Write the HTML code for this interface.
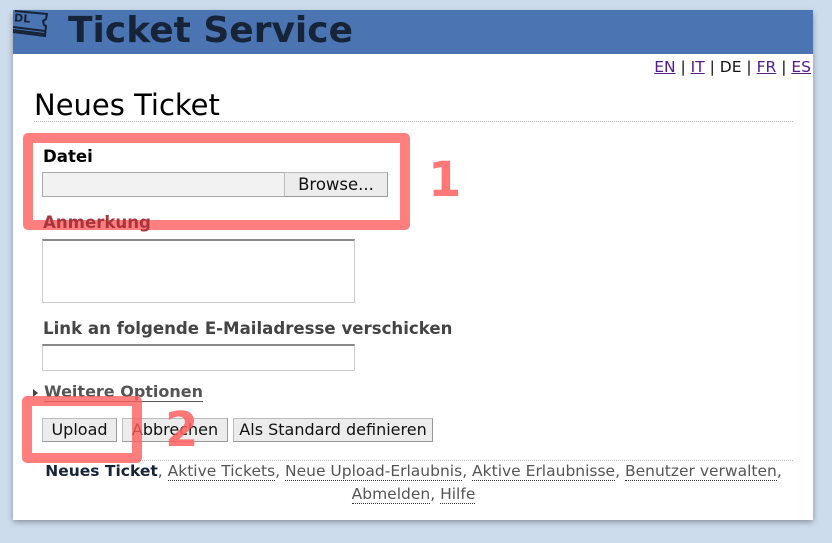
<!DOCTYPE html>
<html><head><meta charset="utf-8">
<style>
body{margin:0;width:832px;height:543px;background:#cddcec;position:relative;overflow:hidden;font-family:"DejaVu Sans","Liberation Sans",sans-serif;}
.a{position:absolute;}
#panel{left:13px;top:11px;width:800px;height:509px;background:#fff;box-shadow:0 2px 6px rgba(0,0,0,.35);}
#hdr{left:13px;top:10px;width:800px;height:44px;background:#4a74b2;}
#title{left:68px;top:9px;font-size:36px;font-weight:bold;color:#172438;line-height:44px;}
.lang{font-size:15.5px;color:#111;}
.lang a{color:#551a8b;text-decoration:underline;}
h1{margin:0;font-weight:normal;font-size:29px;color:#000;}
.lbl{font-size:16.6px;font-weight:bold;color:#444;}
.btn{background:#ececec;border:1px solid #bbb;border-right-color:#999;border-bottom-color:#999;font-size:16px;color:#111;text-align:center;line-height:22px;box-sizing:border-box;}
.inp{border:1px solid #ccc;border-top:2px solid #888;box-sizing:border-box;background:#fff;}
.ft{font-size:15.5px;color:#555;}
.ft span.u{border-bottom:1px dotted #333;}
.box{border:10px solid rgba(255,95,95,.8);border-radius:5px;box-sizing:border-box;}
.num{color:rgba(255,95,95,.85);font-weight:bold;font-size:48px;}
</style></head><body>
<div class="a" id="panel"></div>
<div class="a" id="hdr"></div>
<svg class="a" style="left:12px;top:10px" width="40" height="30" viewBox="0 0 40 30">
<path d="M3 1 L35 4 L34 9 L31 11 L32 15 L34 16 L33 26 L1 22" fill="none" stroke="#172438" stroke-width="2"/>
<text x="2" y="12" font-size="11" font-weight="bold" fill="#172438" font-family="DejaVu Sans" transform="rotate(4 10 10)">DL</text>
<path d="M1 17 L33 21 M1 20 L33 24" stroke="#172438" stroke-width="2"/>
</svg>
<div class="a" id="title">Ticket Service</div>
<div class="a lang" style="right:21px;top:58px"><a>EN</a> | <a>IT</a> | DE | <a>FR</a> | <a>ES</a></div>
<h1 class="a" style="left:34px;top:88px">Neues Ticket</h1>
<div class="a" style="left:34px;top:121px;width:759px;border-top:1px dotted #bbb"></div>

<div class="a lbl" style="left:43px;top:147px;color:#000">Datei</div>
<div class="a" style="left:42px;top:172px;width:243px;height:25px;background:#f2f2f2;border:1px solid #aaa;box-sizing:border-box"></div>
<div class="a btn" style="left:284px;top:172px;width:104px;height:25px;line-height:23px;font-size:16.5px">Browse...</div>

<div class="a lbl" style="left:43px;top:239px;width:313px;height:64px"></div>
<div class="a inp" style="left:42px;top:239px;width:313px;height:64px"></div>
<div class="a lbl" style="left:43px;top:319px">Link an folgende E-Mailadresse verschicken</div>
<div class="a inp" style="left:42px;top:344px;width:313px;height:27px"></div>

<div class="a" style="left:33px;top:389px;width:0;height:0;border-left:5px solid #444;border-top:4px solid transparent;border-bottom:4px solid transparent"></div>
<div class="a" style="left:44px;top:382px;font-size:16px;font-weight:bold;color:#555;border-bottom:1px solid #555;line-height:19px">Weitere Optionen</div>

<div class="a btn" style="left:42px;top:418px;width:75px;height:24px">Upload</div>
<div class="a btn" style="left:122px;top:418px;width:106px;height:24px">Abbrechen</div>
<div class="a btn" style="left:233px;top:418px;width:200px;height:24px">Als Standard definieren</div>

<div class="a" style="left:34px;top:460px;width:759px;border-top:1px dotted #bbb"></div>
<div class="a ft" style="left:34px;top:460px;width:759px;text-align:center;line-height:23px"><b style="color:#172438">Neues Ticket</b>, <span class="u">Aktive Tickets</span>, <span class="u">Neue Upload-Erlaubnis</span>, <span class="u">Aktive Erlaubnisse</span>, <span class="u">Benutzer verwalten</span>,<br><span class="u">Abmelden</span>, <span class="u">Hilfe</span></div>

<div class="a box" style="left:23px;top:133px;width:387px;height:97px"></div>
<div class="a lbl" style="left:43px;top:213px;color:#a8343c">Anmerkung</div>
<div class="a num" style="left:428px;top:152px">1</div>
<div class="a box" style="left:22px;top:396px;width:120px;height:67px"></div>
<div class="a num" style="left:165px;top:402px">2</div>
</body></html>
